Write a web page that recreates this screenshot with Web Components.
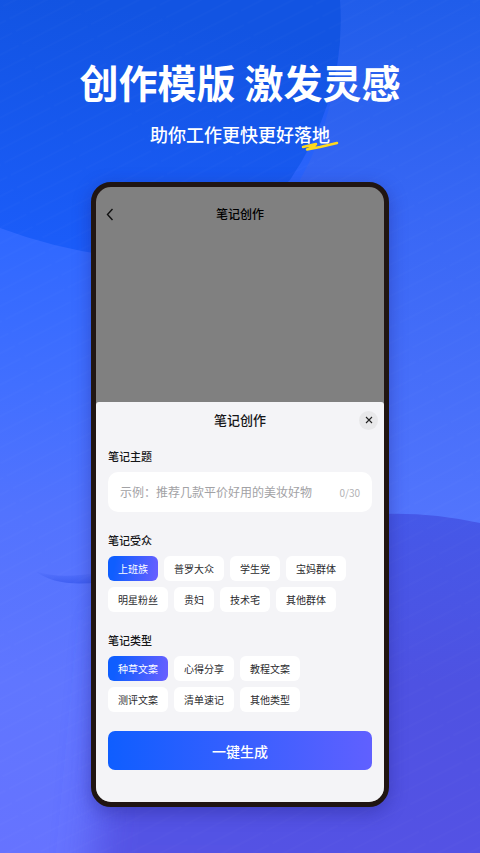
<!DOCTYPE html>
<html lang="zh-CN">
<head>
<meta charset="utf-8">
<meta name="viewport" content="width=device-width, initial-scale=1">
<title>笔记创作</title>
<style>
  html, body { margin: 0; min-height: 100%; }
  body { font-family: "Noto Sans CJK SC", sans-serif; }
</style>
</head>
<body>
<promo-page>
  <promo-heading slot="heading"></promo-heading>
  <phone-frame>
    <note-sheet></note-sheet>
  </phone-frame>
</promo-page>

<script>
const html = String.raw;

const makeTemplate = (markup) => {
  const template = document.createElement("template");
  template.innerHTML = markup;
  return template;
};

class BaseElement extends HTMLElement {
  constructor() {
    super();
    const root = this.attachShadow({ mode: "open" });
    root.appendChild(this.constructor.template.content.cloneNode(true));
  }
}

class PromoPage extends BaseElement {
  static template = makeTemplate(html`
    <style>
      :host {
        display: flex;
        flex-direction: column;
        position: relative;
        isolation: isolate;
        box-sizing: border-box;
        min-height: 100vh;
        padding: 58px 91px 46px;
        overflow: hidden;
      }
      .backdrop {
        position: absolute;
        inset: 0;
        width: 100%;
        height: 100%;
        z-index: -1;
      }
    </style>
    <svg class="backdrop" viewBox="0 0 480 853" preserveAspectRatio="none" aria-hidden="true">
      <defs>
        <linearGradient id="base" x1="0" y1="0" x2="0" y2="1">
          <stop offset="0" stop-color="#1a56ee" />
          <stop offset="0.27" stop-color="#2f68ff" />
          <stop offset="0.45" stop-color="#416fff" />
          <stop offset="0.6" stop-color="#5273fe" />
          <stop offset="0.8" stop-color="#6076ff" />
          <stop offset="1" stop-color="#6673ff" />
        </linearGradient>
        <linearGradient id="top" x1="0.2" y1="0" x2="0" y2="1">
          <stop offset="0" stop-color="#1254e2" />
          <stop offset="1" stop-color="#1c5dfb" />
        </linearGradient>
        <linearGradient id="right" x1="0" y1="0" x2="0" y2="1">
          <stop offset="0" stop-color="#205dea" />
          <stop offset="0.4" stop-color="#3867f5" />
          <stop offset="1" stop-color="#5375fd" />
        </linearGradient>
        <linearGradient id="hill" gradientUnits="userSpaceOnUse" x1="0" y1="514" x2="0" y2="853">
          <stop offset="0" stop-color="#4558e8" />
          <stop offset="0.5" stop-color="#4e52e2" />
          <stop offset="1" stop-color="#5452e4" />
        </linearGradient>
        <linearGradient id="curl" x1="0" y1="0" x2="0" y2="1">
          <stop offset="0" stop-color="#3c5cf0" stop-opacity="0" />
          <stop offset="1" stop-color="#3c5cf0" stop-opacity="0.9" />
        </linearGradient>
        <filter id="soft" x="-50%" y="-20%" width="200%" height="140%">
          <feGaussianBlur stdDeviation="20" />
        </filter>
        <pattern id="rain" width="70" height="14" patternUnits="userSpaceOnUse" patternTransform="rotate(-27)">
          <path d="M0 7H66" stroke="#fff" stroke-opacity="0.025" />
        </pattern>
      </defs>
      <rect width="480" height="853" fill="url(#base)" />
      <path d="M340 0H480V530H300V180Q345 100 340 0Z" fill="url(#right)" />
      <path d="M0 0H340Q347 95 290 180L200 262Q90 262 0 228Z" fill="url(#top)" />
      <path d="M35 571Q60 580 100 572V582Q58 588 35 571Z" fill="url(#curl)" />
      <path d="M115 620H340V950H85Z" fill="url(#hill)" filter="url(#soft)" />
      <path d="M480 523Q430 512 380 514L240 700V853H480Z" fill="url(#hill)" />
      <rect width="480" height="853" fill="url(#rain)" />
    </svg>
    <slot name="heading"></slot>
    <slot></slot>
  `);
}

class PromoHeading extends BaseElement {
  static template = makeTemplate(html`
    <style>
      :host {
        display: flex;
        flex-direction: column;
        align-items: center;
        gap: 16px;
        margin: 0 -40px 36px;
        color: #fff;
        text-align: center;
      }
      h1, p { margin: 0; white-space: nowrap; }
      h1 { font-size: 39px; line-height: 46px; padding-bottom: 2px; font-weight: 700; }
      p { font-size: 18px; line-height: 24px; font-weight: 500; }
      .mark { position: relative; }
      .mark svg {
        position: absolute;
        right: -9px;
        bottom: -4px;
        width: 38px;
        height: 10px;
      }
    </style>
    <h1>创作模版 激发灵感</h1>
    <p>助你工作更快更好<span class="mark">落地<svg viewBox="0 0 38 10" aria-hidden="true">
      <path d="M2 6L15 3L12 6L6 8.500L19 6L36 2" fill="none" stroke="#ffd91c" stroke-width="2.500" stroke-linecap="round" stroke-linejoin="round" />
    </svg></span></p>
  `);
}

class PhoneFrame extends BaseElement {
  static template = makeTemplate(html`
    <style>
      :host {
        display: flex;
        flex-direction: column;
        flex: 1;
        box-sizing: border-box;
        border: 5px solid #201512;
        border-radius: 20px;
        background: #808080;
        overflow: hidden;
        box-shadow: 0 5px 18px rgba(30, 30, 130, 0.4);
      }
      header {
        display: grid;
        grid-template-columns: 24px 1fr 24px;
        align-items: center;
        flex: 1;
        align-content: start;
        padding: 15px 2px;
      }
      button {
        display: grid;
        place-items: center;
        height: 24px;
        padding: 0;
        border: 0;
        background: none;
      }
      h2 {
        margin: 0;
        font-size: 12px;
        line-height: 24px;
        font-weight: 500;
        text-align: center;
      }
    </style>
    <header>
      <button type="button" aria-label="返回">
        <svg width="8" height="13" viewBox="0 0 8 13" aria-hidden="true">
          <path d="M6.5 1L1.5 6.5L6.5 12" fill="none" stroke="#111" stroke-width="1.4" />
        </svg>
      </button>
      <h2>笔记创作</h2>
    </header>
    <slot></slot>
  `);
}

class NoteSheet extends BaseElement {
  static template = makeTemplate(html`
    <style>
      :host {
        display: flex;
        flex-direction: column;
        padding: 6px 12px 32px;
        border-radius: 3px 3px 0 0;
        background: #f4f4f7;
        color: #161618;
      }
      header {
        display: grid;
        grid-template-columns: 19px 1fr 19px;
        align-items: center;
        margin: 0 -6px 16px;
      }
      h2 {
        grid-column: 2;
        margin: 0;
        font-size: 13px;
        line-height: 24px;
        font-weight: 500;
        text-align: center;
      }
      .close {
        display: grid;
        place-items: center;
        width: 19px;
        height: 19px;
        padding: 0;
        border: 0;
        border-radius: 50%;
        background: #e8e8ea;
      }
      label {
        margin-bottom: 8px;
        font-size: 11px;
        line-height: 16px;
        font-weight: 500;
      }
      .field {
        display: flex;
        align-items: center;
        height: 40px;
        margin-bottom: 20px;
        padding: 0 12px;
        border-radius: 10px;
        background: #fff;
      }
      input {
        flex: 1;
        min-width: 0;
        padding: 0;
        border: 0;
        outline: 0;
        background: none;
        font: 12px/20px "Noto Sans CJK SC", sans-serif;
      }
      input::placeholder { color: #a2a2a5; opacity: 1; }
      .count { font-size: 10px; color: #b2b2b5; }
      chip-group + chip-group { margin-top: 20px; }
      .submit {
        height: 39px;
        margin-top: 19px;
        padding: 0;
        border: 0;
        border-radius: 7px;
        background: linear-gradient(90deg, #0f5eff, #6060ff);
        color: #fff;
        font: 500 14px/20px "Noto Sans CJK SC", sans-serif;
      }
    </style>
    <header>
      <h2>笔记创作</h2>
      <button class="close" type="button" aria-label="关闭">
        <svg width="8" height="8" viewBox="0 0 8 8" aria-hidden="true">
          <path d="M1 1L7 7M7 1L1 7" stroke="#222" stroke-width="1.1" />
        </svg>
      </button>
    </header>
    <label for="topic">笔记主题</label>
    <div class="field">
      <input id="topic" type="text" maxlength="30" placeholder="示例：推荐几款平价好用的美妆好物">
      <span class="count">0/30</span>
    </div>
    <chip-group label="笔记受众" options="上班族,普罗大众,学生党,宝妈群体,明星粉丝,贵妇,技术宅,其他群体"></chip-group>
    <chip-group narrow label="笔记类型" options="种草文案,心得分享,教程文案,测评文案,清单速记,其他类型"></chip-group>
    <button class="submit" type="button">一键生成</button>
  `);

  connectedCallback() {
    const input = this.shadowRoot.querySelector("input");
    const count = this.shadowRoot.querySelector(".count");
    input.addEventListener("input", () => {
      count.textContent = `${input.value.length}/30`;
    });
  }
}

class ChipGroup extends BaseElement {
  static template = makeTemplate(html`
    <style>
      :host { display: block; }
      h3 {
        margin: 0 0 8px;
        font-size: 11px;
        line-height: 16px;
        font-weight: 500;
      }
      .chips {
        display: flex;
        flex-wrap: wrap;
        gap: 6px;
      }
      :host([narrow]) .chips {
        display: grid;
        grid-template-columns: repeat(3, max-content);
      }
      button {
        height: 25px;
        padding: 0 10px;
        border: 0;
        border-radius: 6px;
        background: #fff;
        color: #2b2b2e;
        font: 10px/16px "Noto Sans CJK SC", sans-serif;
      }
      button[aria-pressed="true"] {
        background: linear-gradient(100deg, #0f5eff 15%, #6a5fff);
        color: #fff;
      }
    </style>
    <h3 id="title"></h3>
    <div class="chips" role="group" aria-labelledby="title"></div>
  `);

  connectedCallback() {
    this.shadowRoot.querySelector("h3").textContent = this.getAttribute("label");
    const chips = this.shadowRoot.querySelector(".chips");
    this.getAttribute("options").split(",").forEach((name, i) => {
      const button = document.createElement("button");
      button.type = "button";
      button.textContent = name;
      button.setAttribute("aria-pressed", String(i === 0));
      chips.appendChild(button);
    });
    chips.addEventListener("click", (event) => {
      const picked = event.target.closest("button");
      if (!picked) return;
      for (const button of chips.children) {
        button.setAttribute("aria-pressed", String(button === picked));
      }
    });
  }
}

customElements.define("promo-page", PromoPage);
customElements.define("promo-heading", PromoHeading);
customElements.define("phone-frame", PhoneFrame);
customElements.define("chip-group", ChipGroup);
customElements.define("note-sheet", NoteSheet);
</script>
</body>
</html>
